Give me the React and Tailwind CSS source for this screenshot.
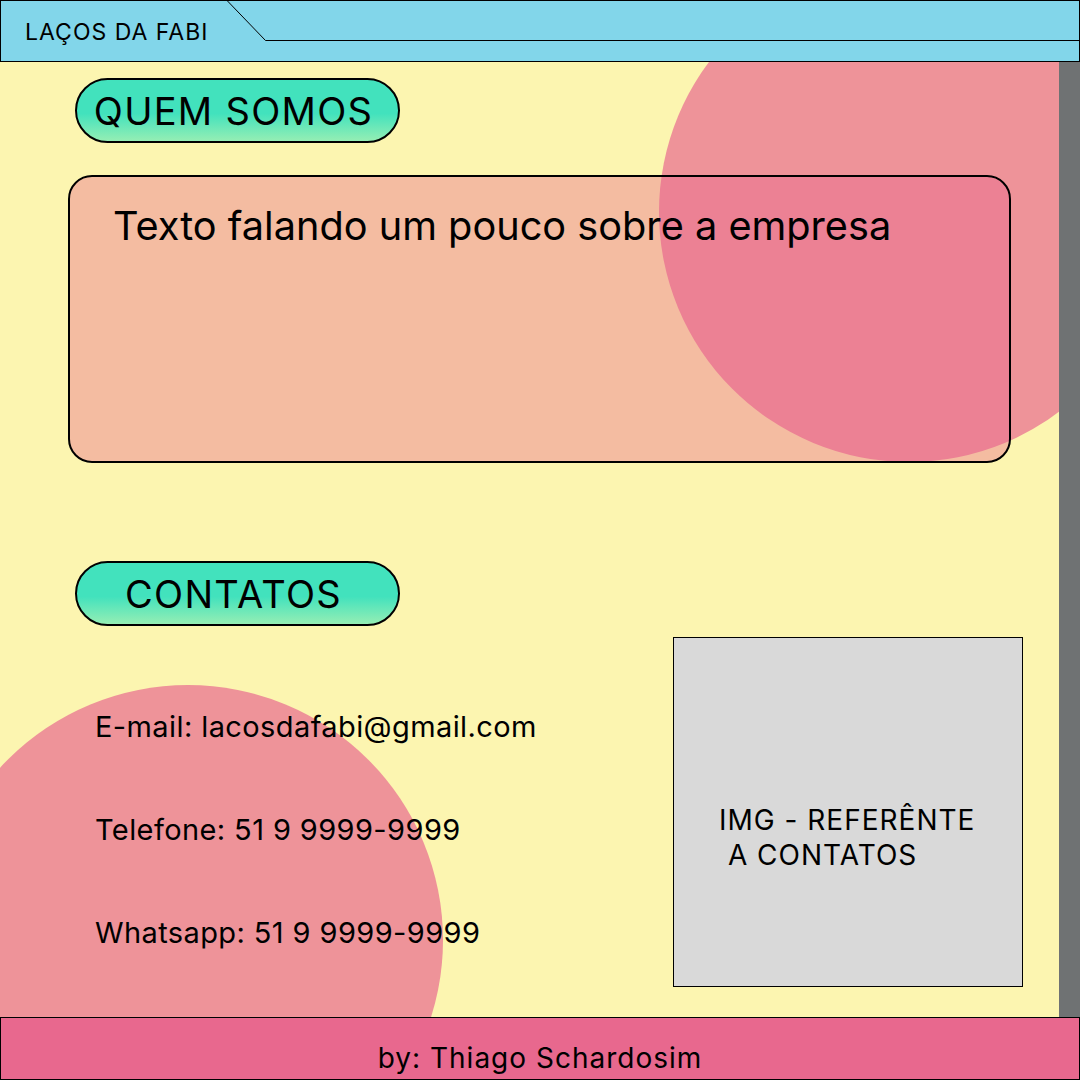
import React from 'react';

const contacts = [
  'E-mail: lacosdafabi@gmail.com',
  'Telefone: 51 9 9999-9999',
  'Whatsapp: 51 9 9999-9999',
];

function Pill({ children }) {
  return (
    <div className="w-[325px] h-[65px] rounded-full border-2 border-black bg-[linear-gradient(180deg,#42E2BD_55%,#95EEB4_100%)] flex items-center justify-center pr-2">
      <span className="text-[38px] leading-none tracking-[1.3px] text-black">{children}</span>
    </div>
  );
}

export default function App() {
  return (
    <div className="w-[1080px] h-[1080px] flex flex-col overflow-hidden font-['Inter',sans-serif] text-black">
      <header className="relative h-[62px] shrink-0 bg-[#82D6EA] border border-black pt-[17px]">
        <svg className="absolute left-0 top-0" width="1080" height="62">
          <path d="M226.5 0 L264.5 39.5 L1080 39.5" fill="none" stroke="#000" strokeWidth="1" />
        </svg>
        <span className="relative block ml-[24px] text-[23px] leading-[28px] tracking-[1px]">LAÇOS DA FABI</span>
      </header>

      <main className="relative flex-1 flex bg-[#FCF5B0] overflow-hidden">
        {/* background circles */}
        <div className="absolute left-[659px] top-[-100px] w-[500px] h-[500px] rounded-full bg-[#EE9399]" />
        <div className="absolute left-[-67px] top-[623px] w-[510px] h-[510px] rounded-full bg-[#EE9399]" />

        <div className="relative flex-1 flex flex-col pl-[75px] pt-[16px]">
          <Pill>QUEM SOMOS</Pill>
          <div className="ml-[-7px] mt-[32px] w-[943px] h-[288px] rounded-[24px] border-2 border-black bg-[#E8678C]/40 pl-[43px] pt-[25px]">
            <p className="text-[39.7px] leading-[48px]">Texto falando um pouco sobre a empresa</p>
          </div>

          <div className="mt-[98px]">
            <Pill>CONTATOS</Pill>
          </div>

          <div className="mt-[11px] flex">
            <div className="w-[598px] pl-[20px] pt-[72px] flex flex-col gap-[68px]">
              {contacts.map((c) => (
                <p key={c} className="text-[29px] leading-[35px] tracking-[0.4px]">{c}</p>
              ))}
            </div>
            <div className="w-[350px] h-[350px] bg-[#D9D9D9] border border-black pl-[45px] pt-[165px]">
              <p className="text-[28px] leading-[35px] tracking-[1px] whitespace-pre">{'IMG - REFERÊNTE\n A CONTATOS'}</p>
            </div>
          </div>
        </div>

        <div className="relative w-[21px] shrink-0 bg-[#6F7273]" />
      </main>

      <footer className="h-[63px] shrink-0 bg-[#E8688E] border border-black pt-[20px] flex justify-center">
        <span className="text-[28px] leading-[40px] tracking-[1px]">by: Thiago Schardosim</span>
      </footer>
    </div>
  );
}
